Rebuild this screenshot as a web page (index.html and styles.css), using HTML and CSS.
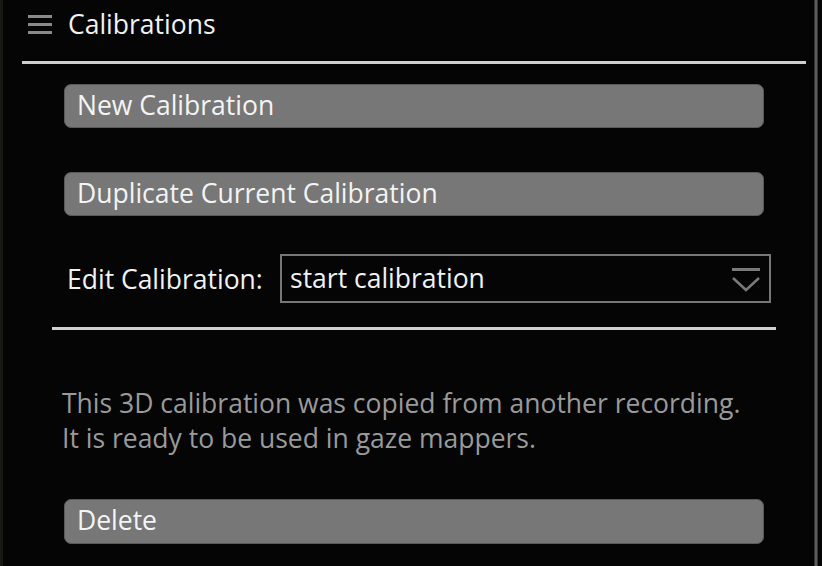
FILE: index.html
```html
<!DOCTYPE html>
<html lang="en">
<head>
    <meta charset="UTF-8">
    <title>Calibrations</title>
    <link rel="stylesheet" href="styles.css">
</head>
<body>
    <div class="edge"></div>
    <div class="panel">
        <header class="menu-head">
            <svg class="burger" width="24" height="20" viewBox="0 0 24 20">
                <rect x="0" y="1" width="24" height="3" fill="#8a8a8a"/>
                <rect x="0" y="9" width="24" height="3" fill="#8a8a8a"/>
                <rect x="0" y="17" width="24" height="3" fill="#8a8a8a"/>
            </svg>
            <span class="title">Calibrations</span>
        </header>
        <div class="content">
            <button class="btn first">New Calibration</button>
            <button class="btn">Duplicate Current Calibration</button>
            <div class="select-row">
                <span class="label">Edit Calibration:</span>
                <div class="select">
                    <span>start calibration</span>
                    <svg class="arrow" width="28" height="24" viewBox="0 0 28 24">
                        <rect x="0" y="0" width="28" height="3" fill="#7a7a7a"/>
                        <path d="M1 10 L14 22 L27 10" fill="none" stroke="#7a7a7a" stroke-width="2.5"/>
                    </svg>
                </div>
            </div>
            <div class="sep"></div>
            <p class="info">This 3D calibration was copied from another recording.<br>It is ready to be used in gaze mappers.</p>
            <button class="btn last">Delete</button>
        </div>
    </div>
    <div class="scroll"></div>
</body>
</html>
```

FILE: styles.css
```css
html, body {
    margin: 0;
    height: 100%;
}
body {
    display: flex;
    background: #050505;
    font-family: 'Open Sans', sans-serif;
    color: #f2f2f2;
    overflow: hidden;
}
.edge {
    width: 3px;
    background: #171713;
}
.panel {
    width: 811px;
    padding-left: 19px;
    box-sizing: border-box;
}
.menu-head {
    display: flex;
    align-items: center;
    height: 61px;
    width: 784px;
    border-bottom: 3px solid #d0d0d0;
    box-sizing: content-box;
}
.burger {
    margin-left: 6px;
    margin-right: 16px;
    margin-top: -13px;
}
.title {
    font-size: 26.5px;
    margin-top: -13px;
}
.content {
    width: 724px;
    margin-left: 30px;
    display: flex;
    flex-direction: column;
}
.btn {
    margin: 0 12px;
    height: 44px;
    background: #777;
    border: 1px solid #5a5a5a;
    border-radius: 7px;
    color: #f4f4f4;
    font-family: 'Open Sans', sans-serif;
    font-size: 26.5px;
    text-align: left;
    padding: 0 12px 3px;
    margin-bottom: 44px;
}
.btn.first {
    margin-top: 20px;
}
.btn.last {
    margin-top: 43px;
    height: 45px;
}
.select-row {
    display: flex;
    align-items: center;
    margin-top: -6px;
    height: 49px;
}
.label {
    font-size: 26.5px;
    margin-left: 15px;
}
.select {
    width: 491px;
    margin-left: auto;
    margin-right: 5px;
    height: 49px;
    box-sizing: border-box;
    border: 2px solid #777;
    display: flex;
    align-items: center;
    justify-content: space-between;
    padding: 0 9px 0 8px;
    font-size: 26.5px;
}
.select span {
    margin-top: -2px;
}
.arrow {
    margin-top: 3px;
}
.sep {
    margin-top: 24px;
    height: 3px;
    background: #d0d0d0;
}
.info {
    margin: 56px 0 0 10px;
    font-size: 26.5px;
    line-height: 35px;
    color: #9a9a9a;
}
.scroll {
    width: 2px;
    background: #5c5c5c;
    border-left: 1px solid #333;
    border-right: 1px solid #333;
}
```
